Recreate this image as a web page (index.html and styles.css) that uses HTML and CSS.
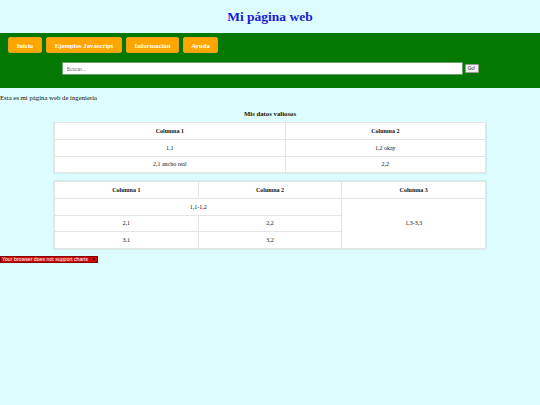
FILE: index.html
```html
<!DOCTYPE html>
<html lang="es">
<head>
<meta charset="utf-8">
<title>Mi página web</title>
<link rel="stylesheet" href="styles.css">
</head>
<body>
<header class="top">
  <h1 class="title">Mi página web</h1>
</header>
<nav class="nav">
  <div class="menu">
    <a class="btn b-inicio" href="#">Inicio</a>
    <a class="btn b-ejemplos" href="#">Ejemplos Javascript</a>
    <a class="btn b-info" href="#">Información</a>
    <a class="btn b-ayuda" href="#">Ayuda</a>
  </div>
  <form class="search">
    <input class="search-input" type="text" placeholder="Buscar...">
    <button class="go" type="button">Go!</button>
  </form>
</nav>
<main class="content">
  <p class="intro">Esta es mi página web de ingeniería</p>
  <table class="data t1">
    <caption>Mis datos valiosos</caption>
    <tr><th>Columna 1</th><th>Columna 2</th></tr>
    <tr><td>1,1</td><td>1,2 okay</td></tr>
    <tr><td>2,1 ancho real</td><td>2,2</td></tr>
  </table>
  <table class="data t2">
    <tr><th>Columna 1</th><th>Columna 2</th><th>Columna 3</th></tr>
    <tr><td colspan="2">1,1-1,2</td><td rowspan="3">1,3-3,3</td></tr>
    <tr><td>2,1</td><td>2,2</td></tr>
    <tr><td>3,1</td><td>3,2</td></tr>
  </table>
  <div class="chart"><span class="chart-text">Your browser does not support charts</span><span class="chart-mark"></span></div>
</main>
</body>
</html>
```
FILE: styles.css
```css
html, body {
  margin: 0;
  padding: 0;
  background: #dcfcfd;
  font-family: "Liberation Serif", "Times New Roman", serif;
  font-size: 6.75px;
  color: #111;
}
.top {
  height: 33px;
  display: flex;
  align-items: center;
  justify-content: center;
}
.title {
  margin: 0;
  font-size: 13.5px;
  font-weight: bold;
  color: #1a1ad6;
}
.nav {
  background: #037903;
  height: 55px;
  box-sizing: border-box;
  padding: 4px 8px 0 8px;
}
.menu {
  display: flex;
  gap: 4px;
}
.btn {
  display: block;
  height: 16px;
  line-height: 15px;
  box-sizing: border-box;
  padding: 0;
  text-align: center;
  white-space: nowrap;
  background: #ffa500;
  border: 0.5px solid #e8a020;
  border-radius: 2px;
  color: #fff;
  font-weight: bold;
  text-decoration: none;
}
.b-inicio { width: 34px; }
.b-ejemplos { width: 76px; }
.b-info { width: 53px; }
.b-ayuda { width: 35px; }
.search {
  display: flex;
  align-items: center;
  justify-content: center;
  gap: 2px;
  margin: 9px 0 0 0;
}
.search-input {
  width: 401px;
  height: 13px;
  box-sizing: border-box;
  margin: 0;
  padding: 0 4px;
  border: 0.5px solid #6aa06a;
  border-radius: 1px;
  background: #fff;
  font-family: "Liberation Sans", Arial, sans-serif;
  font-size: 5px;
  outline: none;
}
.search-input::placeholder {
  color: #777;
}
.go {
  height: 9px;
  width: 14px;
  box-sizing: border-box;
  margin: 0 0 1px 0;
  padding: 0;
  border: 0.5px solid #999;
  border-radius: 1px;
  background: #efefef;
  font-family: "Liberation Sans", Arial, sans-serif;
  font-size: 4.5px;
  color: #222;
  line-height: 8px;
}
.intro {
  margin: 6px 0 0 0;
  line-height: 8px;
}
.data {
  width: 432px;
  margin: 0 auto;
  border-collapse: collapse;
  background: #fff;
  box-shadow: 0 0 1.5px rgba(0, 0, 0, 0.22);
  font-size: 6px;
}
.data caption {
  font-weight: bold;
  font-size: 6.75px;
  line-height: 8px;
  padding: 4px 0 4px 0;
  background: #dcfcfd;
}
.data th, .data td {
  border: 1px solid #e4e4e4;
  text-align: center;
  padding: 0;
}
.data th {
  height: 16px;
  font-weight: bold;
}
.data td {
  height: 15.5px;
}
.t1 {
  margin-top: 4px;
}
.t1 th:first-child, .t1 td:first-child {
  width: 53.5%;
}
.t2 {
  margin-top: 8px;
}
.t2 th {
  width: 33.33%;
}
.chart {
  margin-top: 7px;
  width: 98px;
  height: 7px;
  box-sizing: border-box;
  background: #c80a0a;
  border: 0.5px solid #8a0000;
  display: flex;
  align-items: center;
  justify-content: space-between;
  padding: 0 1px;
}
.chart-text {
  color: #fff;
  font-family: "Liberation Sans", Arial, sans-serif;
  font-size: 5.2px;
  line-height: 6px;
}
.chart-mark {
  width: 2.5px;
  height: 2.5px;
  background: #6a0000;
  margin-right: 1px;
}
```
